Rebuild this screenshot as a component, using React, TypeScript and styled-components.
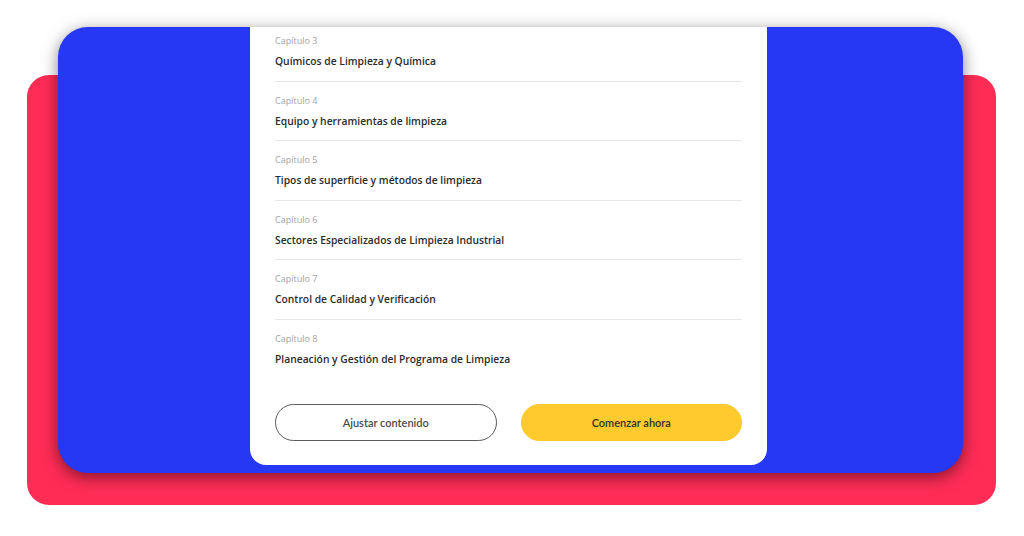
import * as React from 'react'
import styled, { createGlobalStyle } from 'styled-components'

const GlobalStyle = createGlobalStyle`
  html, body {
    margin: 0;
    padding: 0;
    background: #ffffff;
  }
  * {
    box-sizing: border-box;
  }
`

const Stage = styled.main`
  width: 1024px;
  height: 536px;
  display: grid;
  padding: 27px 0 0 27px;
  overflow: hidden;
`

const BackPanel = styled.div`
  grid-area: 1 / 1;
  align-self: start;
  justify-self: start;
  margin-top: 48px;
  width: 969px;
  height: 430px;
  border-radius: 22px;
  background: #ff2c56;
`

const FrontPanel = styled.section`
  grid-area: 1 / 1;
  align-self: start;
  justify-self: start;
  margin-left: 31px;
  width: 905px;
  height: 446px;
  border-radius: 30px;
  background: #2638f4;
  box-shadow: 0 4px 16px rgba(0, 0, 0, 0.5);
  overflow: hidden;
  display: flex;
  flex-direction: column;
  justify-content: flex-end;
  padding: 0 0 8px 192px;
`

const Card = styled.div`
  width: 517px;
  flex-shrink: 0;
  background: #ffffff;
  border-radius: 16px;
  padding: 20px 25px 24px;
  display: flex;
  flex-direction: column;
`

const ChapterList = styled.ul`
  list-style: none;
  margin: 0;
  padding: 0;
`

const Chapter = styled.li<{ $last?: boolean }>`
  display: flex;
  flex-direction: column;
  gap: 6px;
  padding: 12px 0 11px;
  border-bottom: ${(p) => (p.$last ? 'none' : '1px solid #e6e6e6')};
`

const ChapterLabel = styled.span`
  font-family: 'Open Sans', 'Noto Sans', sans-serif;
  font-size: 9px;
  line-height: 14px;
  color: #a3a3a3;
`

const ChapterTitle = styled.span`
  font-family: 'Open Sans', 'Noto Sans', sans-serif;
  font-size: 10.3px;
  font-weight: 600;
  line-height: 15.5px;
  color: #2b2b2b;
`

const Actions = styled.div`
  display: grid;
  grid-template-columns: 1fr 1fr;
  gap: 24px;
  margin-top: 26px;
`

const Button = styled.button<{ $primary?: boolean }>`
  height: 37px;
  border-radius: 19px;
  font-family: Lato, 'Open Sans', sans-serif;
  font-size: 11px;
  font-weight: 600;
  cursor: pointer;
  color: ${(p) => (p.$primary ? '#33302a' : '#4a4a4a')};
  background: ${(p) => (p.$primary ? '#ffca2e' : '#ffffff')};
  border: ${(p) => (p.$primary ? '1px solid #ffca2e' : '1px solid #5a5a5a')};
`

const chapters = [
  { n: 3, title: 'Químicos de Limpieza y Química' },
  { n: 4, title: 'Equipo y herramientas de limpieza' },
  { n: 5, title: 'Tipos de superficie y métodos de limpieza' },
  { n: 6, title: 'Sectores Especializados de Limpieza Industrial' },
  { n: 7, title: 'Control de Calidad y Verificación' },
  { n: 8, title: 'Planeación y Gestión del Programa de Limpieza' },
]

export default function App() {
  return (
    <>
      <GlobalStyle />
      <Stage>
        <BackPanel />
        <FrontPanel>
          <Card>
            <ChapterList>
              {chapters.map((c, i) => (
                <Chapter key={c.n} $last={i === chapters.length - 1}>
                  <ChapterLabel>Capítulo {c.n}</ChapterLabel>
                  <ChapterTitle>{c.title}</ChapterTitle>
                </Chapter>
              ))}
            </ChapterList>
            <Actions>
              <Button>Ajustar contenido</Button>
              <Button $primary>Comenzar ahora</Button>
            </Actions>
          </Card>
        </FrontPanel>
      </Stage>
    </>
  )
}
